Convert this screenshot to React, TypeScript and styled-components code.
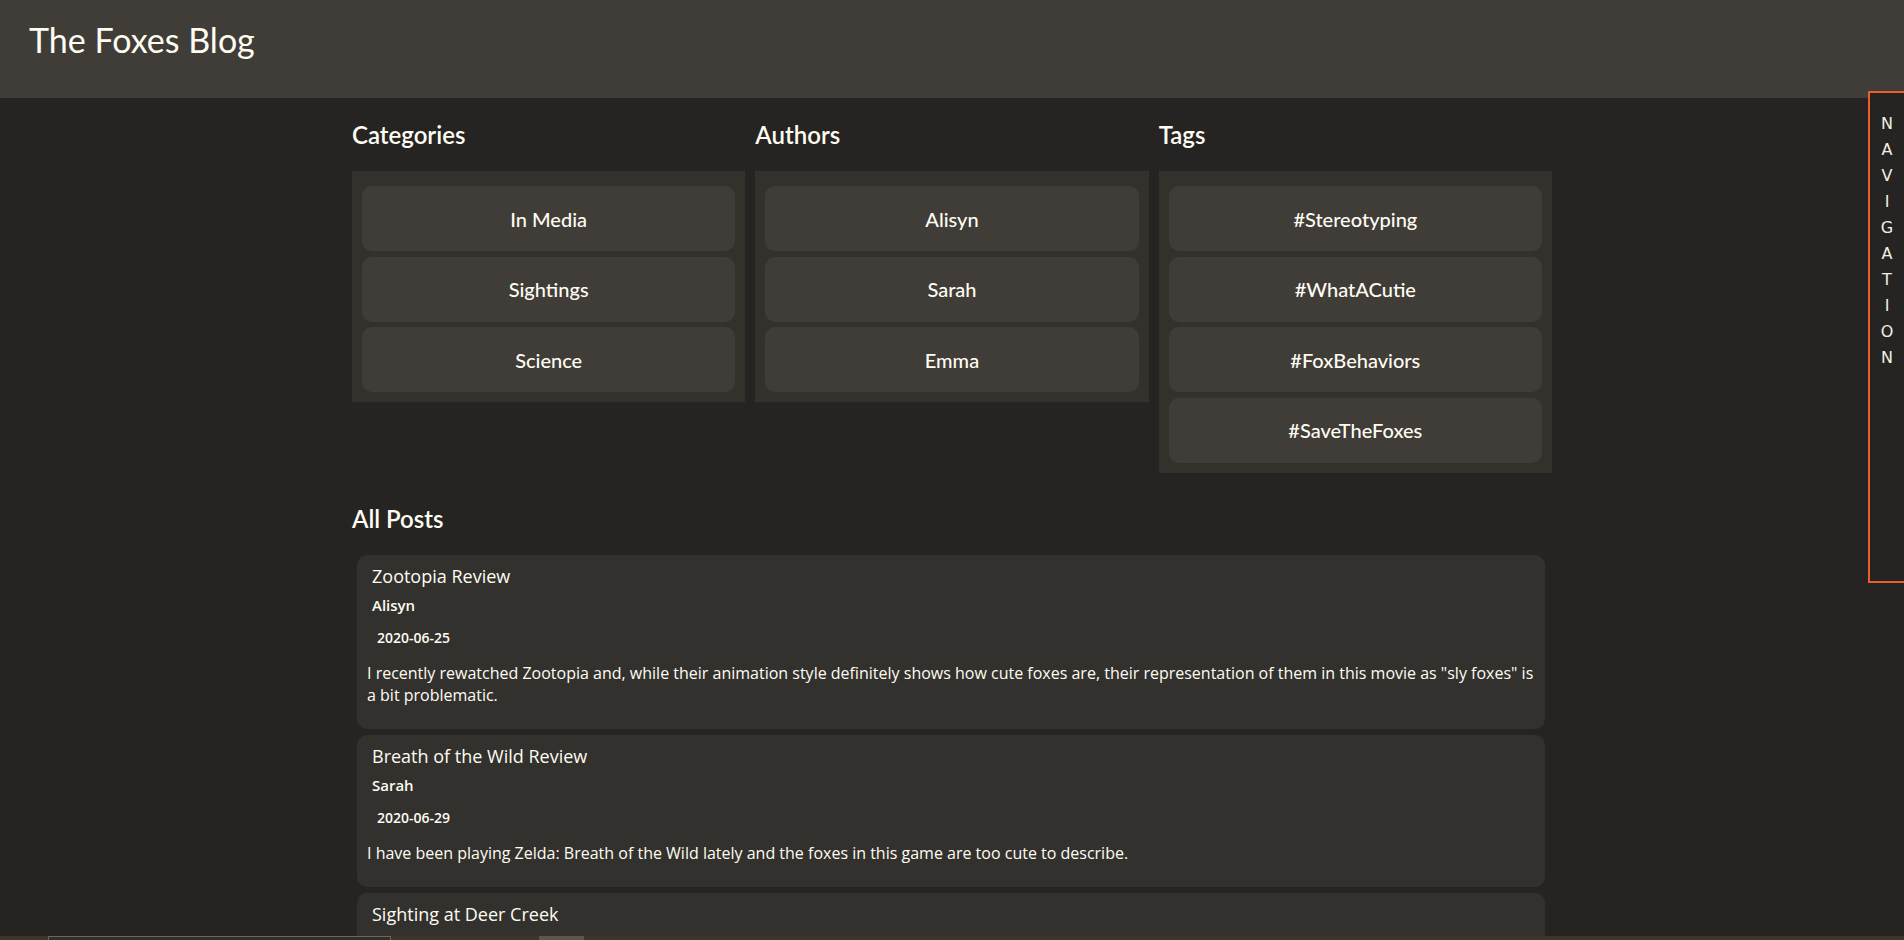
import React from "react";
import styled, { createGlobalStyle } from "styled-components";

const GlobalStyle = createGlobalStyle`
  html, body {
    margin: 0;
    padding: 0;
    background: #252422;
    color: #fffcf2;
    font-family: "Open Sans", "Noto Sans", sans-serif;
    overflow: hidden;
  }
  * { box-sizing: border-box; }
`;

const Header = styled.header`
  height: 98px;
  background: #403d39;
  padding: 19px 29px 0;
`;

const SiteTitle = styled.h1`
  margin: 0;
  font-family: Lato, "Noto Sans", sans-serif;
  font-weight: 400;
  font-size: 34px;
  line-height: normal;
  color: #fffcf2;
`;

const Main = styled.main`
  width: 1200px;
  margin: 0 auto;
  padding-top: 22px;
`;

const Columns = styled.div`
  display: grid;
  grid-template-columns: repeat(3, 1fr);
  gap: 10px;
  align-items: start;
`;

const Column = styled.section`
  display: flex;
  flex-direction: column;
`;

const SectionHeading = styled.h2`
  margin: 0 0 22px;
  font-family: Lato, "Noto Sans", sans-serif;
  font-weight: 600;
  font-size: 24px;
  line-height: normal;
  color: #fffcf2;
`;

const Panel = styled.div`
  background: #34312d;
  padding: 9.5px 10px 10px;
  display: flex;
  flex-direction: column;
`;

const LinkButton = styled.button`
  margin-top: 5.5px;
  height: 65px;
  border: none;
  border-radius: 10px;
  background: #403d39;
  color: #fffcf2;
  font-family: Lato, "Noto Sans", sans-serif;
  font-weight: 500;
  font-size: 20px;
  cursor: pointer;
`;

const PostsSection = styled.section`
  margin-top: 31px;
`;

const PostList = styled.div`
  display: flex;
  flex-direction: column;
  gap: 6px;
  padding: 0 5px;
`;

const Card = styled.article`
  background: #33312d;
  border-radius: 10px;
  padding: 9px 10px 23px;
  width: 1188px;
`;

const PostTitle = styled.h3`
  margin: 0 0 0 5px;
  font-family: "Open Sans", sans-serif;
  font-weight: 500;
  font-size: 18px;
  line-height: normal;
`;

const Author = styled.h4`
  margin: 7px 0 0 5px;
  font-family: "Open Sans", sans-serif;
  font-weight: 600;
  font-size: 15px;
  line-height: normal;
`;

const DateText = styled.div`
  margin: 13px 0 0 10px;
  font-family: "Open Sans", sans-serif;
  font-weight: 600;
  font-size: 14px;
  line-height: normal;
`;

const Body = styled.p`
  margin: 15px 0 0;
  font-family: "Open Sans", sans-serif;
  font-weight: 400;
  font-size: 16px;
  line-height: normal;
`;

const NavDrawer = styled.nav`
  position: fixed;
  top: 91px;
  right: -20px;
  width: 56px;
  height: 492px;
  border: 2px solid #eb5e28;
  background: #252422;
  padding: 18px 0 0 10px;
`;

const NavLetters = styled.div`
  width: 14px;
  display: flex;
  flex-direction: column;
  align-items: center;
  font-family: "DejaVu Sans", Verdana, sans-serif;
  font-size: 16px;
  line-height: 26px;
  color: #f2eee4;
`;

const BottomBar = styled.div`
  position: fixed;
  left: 0;
  right: 0;
  bottom: 0;
  height: 4px;
  background: #3d3529;
  display: flex;
  align-items: stretch;
`;

const BarField = styled.div<{ $left: number; $width: number; $bg: string; $border?: string }>`
  margin-left: ${(p) => p.$left}px;
  width: ${(p) => p.$width}px;
  background: ${(p) => p.$bg};
  border: ${(p) => (p.$border ? `1px solid ${p.$border}` : "none")};
  border-bottom: none;
`;

const categories = ["In Media", "Sightings", "Science"];
const authors = ["Alisyn", "Sarah", "Emma"];
const tags = ["#Stereotyping", "#WhatACutie", "#FoxBehaviors", "#SaveTheFoxes"];

const posts = [
  {
    title: "Zootopia Review",
    author: "Alisyn",
    date: "2020-06-25",
    body:
      'I recently rewatched Zootopia and, while their animation style definitely shows how cute foxes are, their representation of them in this movie as "sly foxes" is a bit problematic.',
  },
  {
    title: "Breath of the Wild Review",
    author: "Sarah",
    date: "2020-06-29",
    body:
      "I have been playing Zelda: Breath of the Wild lately and the foxes in this game are too cute to describe.",
  },
  {
    title: "Sighting at Deer Creek",
    author: "Emma",
    date: "2020-07-02",
    body: "Spotted a red fox near the creek this morning.",
  },
];

function LinkColumn({ title, items }: { title: string; items: string[] }) {
  return (
    <Column>
      <SectionHeading>{title}</SectionHeading>
      <Panel>
        {items.map((i) => (
          <LinkButton key={i}>{i}</LinkButton>
        ))}
      </Panel>
    </Column>
  );
}

export default function App() {
  return (
    <>
      <GlobalStyle />
      <Header>
        <SiteTitle>The Foxes Blog</SiteTitle>
      </Header>
      <Main>
        <Columns>
          <LinkColumn title="Categories" items={categories} />
          <LinkColumn title="Authors" items={authors} />
          <LinkColumn title="Tags" items={tags} />
        </Columns>
        <PostsSection>
          <SectionHeading>All Posts</SectionHeading>
          <PostList>
            {posts.map((p) => (
              <Card key={p.title}>
                <PostTitle>{p.title}</PostTitle>
                <Author>{p.author}</Author>
                <DateText>{p.date}</DateText>
                <Body>{p.body}</Body>
              </Card>
            ))}
          </PostList>
        </PostsSection>
      </Main>
      <NavDrawer>
        <NavLetters>
          {"NAVIGATION".split("").map((c, i) => (
            <span key={i}>{c}</span>
          ))}
        </NavLetters>
      </NavDrawer>
      <BottomBar>
        <BarField $left={48} $width={343} $bg="#2f2e2c" $border="#6a6660" />
        <BarField $left={148} $width={45} $bg="#5d564c" />
      </BottomBar>
    </>
  );
}
